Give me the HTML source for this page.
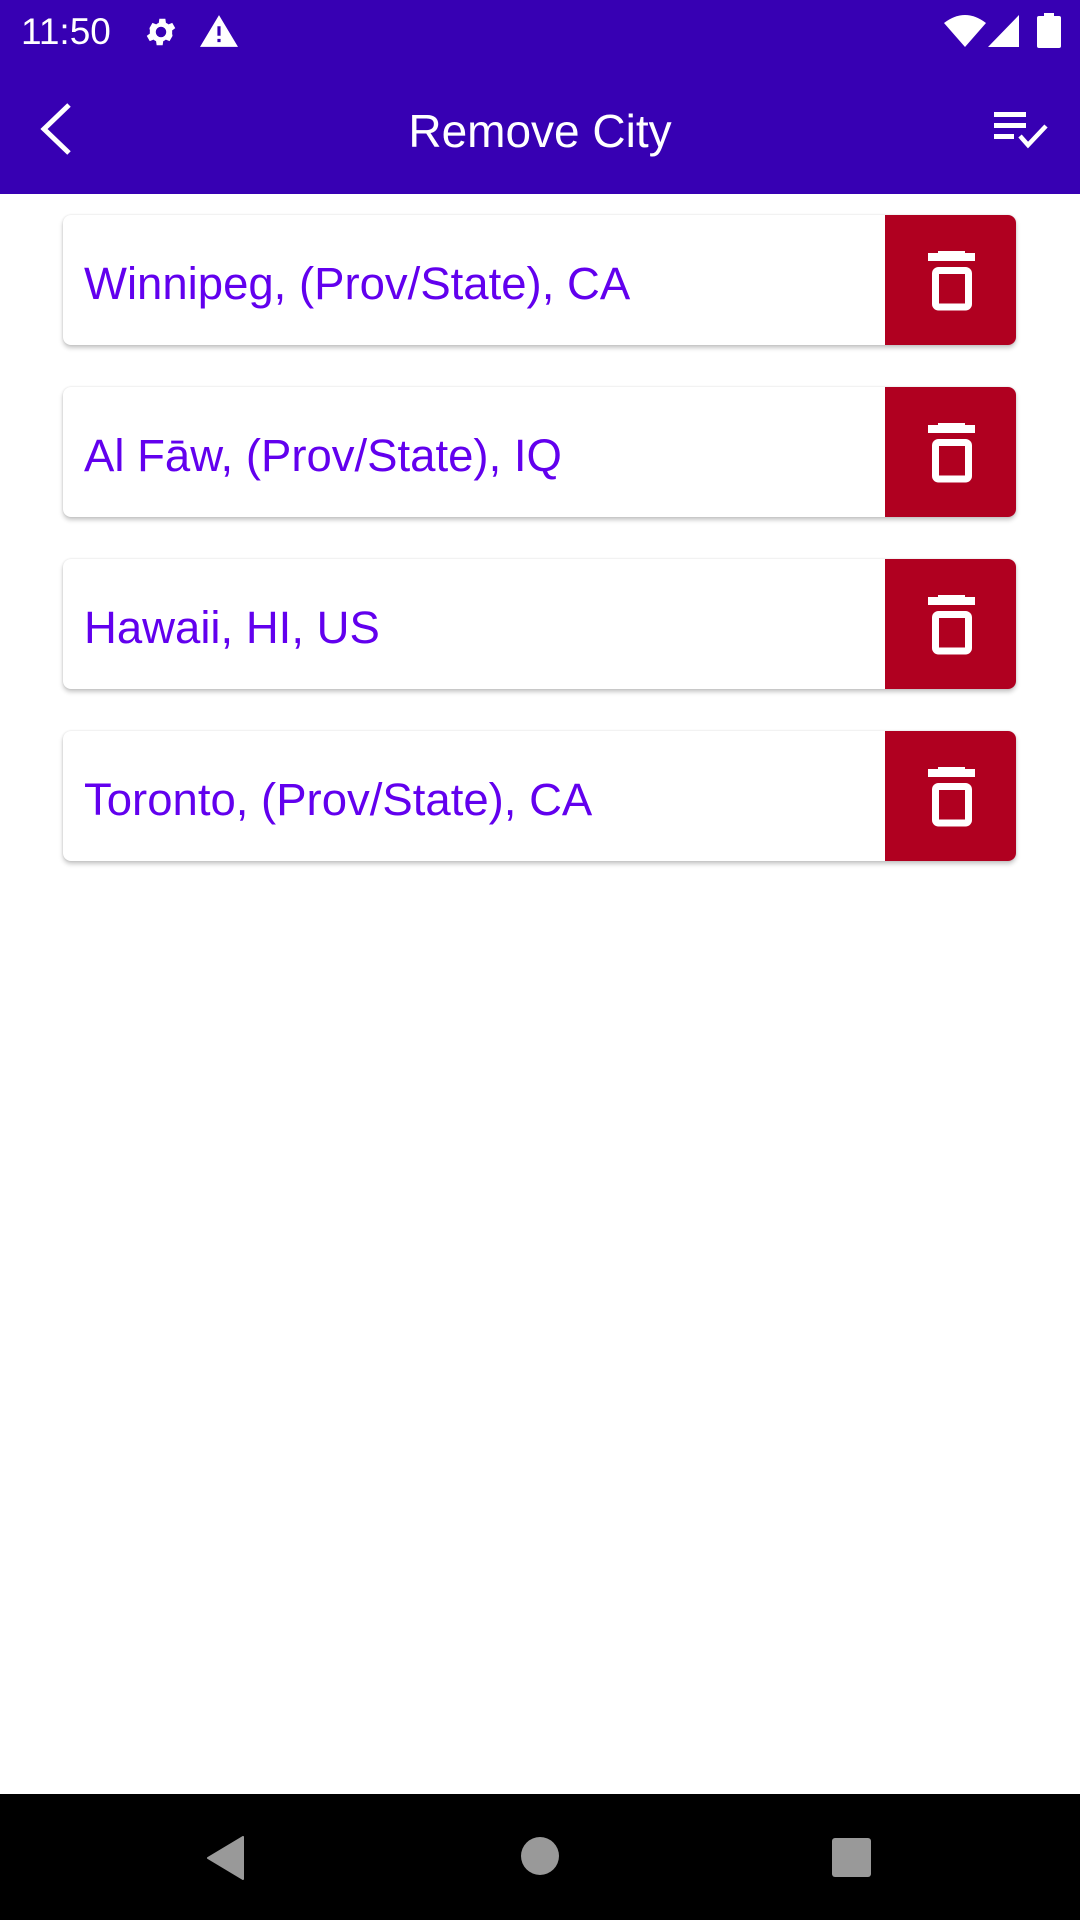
<!DOCTYPE html>
<html><head><meta charset="utf-8"><style>
*{margin:0;padding:0;box-sizing:border-box}
body{width:1080px;height:1920px;position:relative;background:#fff;font-family:"Liberation Sans",sans-serif;overflow:hidden}
.sb{position:absolute;left:0;top:0;width:1080px;height:194px;background:#3700b3}
.time{position:absolute;left:21px;top:11px;color:#fff;font-size:37px}
.title{position:absolute;left:0;width:1080px;top:104px;text-align:center;color:#fff;font-size:46px}
.card{position:absolute;left:63px;width:953px;height:130px;background:#fff;border-radius:8px;box-shadow:0 3px 5px rgba(0,0,0,.22),0 0 2px rgba(0,0,0,.12);overflow:hidden}
.card span{position:absolute;left:21px;top:43px;font-size:45.5px;color:#6200ee;white-space:nowrap}
.del{position:absolute;right:0;top:0;width:131px;height:130px;background:#b00020}
.del svg{position:absolute;left:0;top:0}
.nav{position:absolute;left:0;top:1794px;width:1080px;height:126px;background:#000}
</style></head><body>
<div class="sb">
<div class="time">11:50</div>
<svg style="position:absolute;left:143px;top:14px" width="36" height="36" viewBox="0 0 24 24"><path fill="#fff" d="M19.4 13a7.5 7.5 0 0 0 0-2l2.1-1.6-2-3.5-2.5 1a7.3 7.3 0 0 0-1.7-1l-.4-2.7h-4l-.4 2.7a7.3 7.3 0 0 0-1.7 1l-2.5-1-2 3.5L4.6 11a7.5 7.5 0 0 0 0 2l-2.1 1.6 2 3.5 2.5-1a7.3 7.3 0 0 0 1.7 1l.4 2.7h4l.4-2.7a7.3 7.3 0 0 0 1.7-1l2.5 1 2-3.5zM12 15.5a3.5 3.5 0 1 1 0-7 3.5 3.5 0 0 1 0 7z"/></svg>
<svg style="position:absolute;left:200px;top:15px" width="38" height="32" viewBox="0 0 24 20"><path fill="#fff" d="M12 0L0 20h24zM11 7h2v6h-2zM11 15h2v2h-2z" fill-rule="evenodd"/></svg>
<svg style="position:absolute;left:944px;top:15px" width="42" height="32" viewBox="0 0 42 32"><path fill="#fff" d="M0 8Q21-8 42 8L21 32z"/></svg>
<svg style="position:absolute;left:988px;top:15px" width="31" height="32" viewBox="0 0 31 32"><path fill="#fff" d="M31 0V32H0z"/></svg>
<svg style="position:absolute;left:1037px;top:13px" width="24" height="35" viewBox="0 0 24 35"><rect x="7" y="0" width="10" height="4" fill="#fff"/><rect x="0" y="3" width="24" height="32" rx="2" fill="#fff"/></svg>
<svg style="position:absolute;left:36px;top:102px" width="40" height="54" viewBox="0 0 40 54"><path d="M33 3L8 27l25 24" stroke="#fff" stroke-width="5" fill="none"/></svg>
<div class="title">Remove City</div>
<svg style="position:absolute;left:994px;top:112px" width="58" height="40" viewBox="0 0 58 40"><g fill="#fff"><rect x="0" y="0" width="32" height="5"/><rect x="0" y="11" width="32" height="5"/><rect x="0" y="22" width="20" height="5"/></g><path d="M26 24l8 9 18-19" stroke="#fff" stroke-width="4.5" fill="none"/></svg>
</div>

<div class="card" style="top:215px"><span>Winnipeg, (Prov/State), CA</span><div class="del"><svg width="131" height="130"><path fill="#fff" d="M43 38h47v8H43zM53 36h27v3H53z"/><rect x="50.5" y="55.5" width="33" height="36.5" rx="3" fill="none" stroke="#fff" stroke-width="7"/></svg></div></div>
<div class="card" style="top:387px"><span>Al Fāw, (Prov/State), IQ</span><div class="del"><svg width="131" height="130"><path fill="#fff" d="M43 38h47v8H43zM53 36h27v3H53z"/><rect x="50.5" y="55.5" width="33" height="36.5" rx="3" fill="none" stroke="#fff" stroke-width="7"/></svg></div></div>
<div class="card" style="top:559px"><span>Hawaii, HI, US</span><div class="del"><svg width="131" height="130"><path fill="#fff" d="M43 38h47v8H43zM53 36h27v3H53z"/><rect x="50.5" y="55.5" width="33" height="36.5" rx="3" fill="none" stroke="#fff" stroke-width="7"/></svg></div></div>
<div class="card" style="top:731px"><span>Toronto, (Prov/State), CA</span><div class="del"><svg width="131" height="130"><path fill="#fff" d="M43 38h47v8H43zM53 36h27v3H53z"/><rect x="50.5" y="55.5" width="33" height="36.5" rx="3" fill="none" stroke="#fff" stroke-width="7"/></svg></div></div>

<div class="nav">
<svg style="position:absolute;left:205px;top:42px" width="40" height="44" viewBox="0 0 40 44"><path fill="#999" d="M38 1V43L3 22z" stroke="#999" stroke-width="2" stroke-linejoin="round"/></svg>
<div style="position:absolute;left:521px;top:43px;width:38px;height:38px;border-radius:50%;background:#999"></div>
<div style="position:absolute;left:832px;top:44px;width:39px;height:39px;border-radius:3px;background:#999"></div>
</div>
</body></html>
